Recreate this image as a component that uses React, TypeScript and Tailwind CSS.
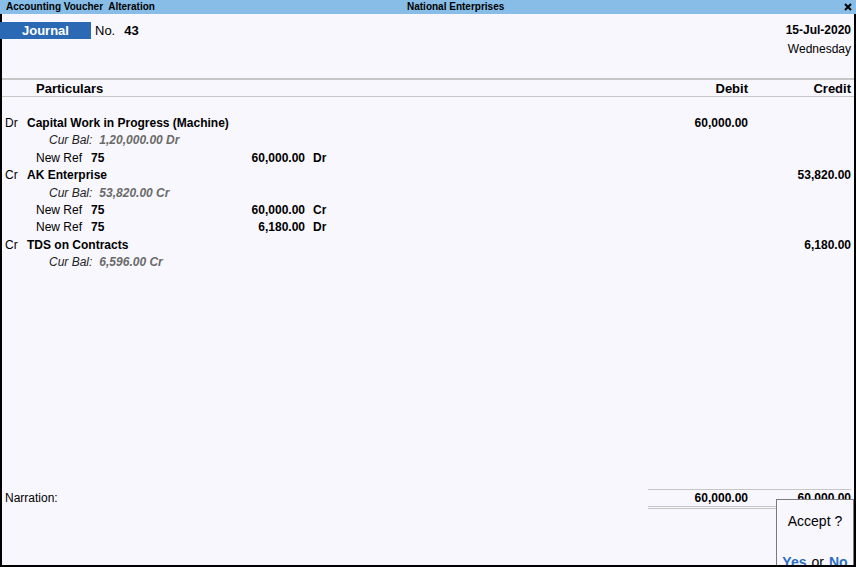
import React from "react"

type Bill = { ref: string; amount: string; side: string }
type Entry = {
    side: string
    ledger: string
    debit?: string
    credit?: string
    curBal: string
    bills: Bill[]
}

const entries: Entry[] = [
    {
        side: "Dr",
        ledger: "Capital Work in Progress (Machine)",
        debit: "60,000.00",
        curBal: "1,20,000.00 Dr",
        bills: [{ ref: "75", amount: "60,000.00", side: "Dr" }],
    },
    {
        side: "Cr",
        ledger: "AK Enterprise",
        credit: "53,820.00",
        curBal: "53,820.00 Cr",
        bills: [
            { ref: "75", amount: "60,000.00", side: "Cr" },
            { ref: "75", amount: "6,180.00", side: "Dr" },
        ],
    },
    {
        side: "Cr",
        ledger: "TDS on Contracts",
        credit: "6,180.00",
        curBal: "6,596.00 Cr",
        bills: [],
    },
]

function Row({ left, debit, credit }: { left: React.ReactNode; debit?: string; credit?: string }) {
    return (
        <div className="grid grid-cols-[1fr_100px_103px] h-[17.4px] leading-[17.4px] text-[12px]">
            <div className="flex">{left}</div>
            <div className="text-right font-bold">{debit}</div>
            <div className="text-right font-bold">{credit}</div>
        </div>
    )
}

export default function App() {
    return (
        <div className="relative w-[856px] h-[567px] overflow-hidden bg-[#f8f7fd] text-black font-['Liberation_Sans',Arial,sans-serif]">
            {/* title bar */}
            <div className="flex items-center h-[14px] bg-[#87bde7] text-[10px] font-bold leading-[14px]">
                <span className="w-[407px] pl-[6px]">Accounting Voucher&nbsp; Alteration</span>
                <span>National Enterprises</span>
                <span className="flex-1" />
                <svg width="8" height="8" viewBox="0 0 8 8" className="mr-[4px]">
                    <path d="M1 1L7 7M7 1L1 7" stroke="#000" strokeWidth="2" />
                </svg>
            </div>

            <div className="flex flex-col h-[553px] border-x-2 border-b-2 border-black">
                {/* voucher header */}
                <div className="flex justify-between h-[64px] pt-[8px] pr-[3px]">
                    <div className="flex h-[17px] leading-[17px] text-[13px]">
                        <div className="w-[91px] -ml-[2px] pl-[22px] bg-[#2c69b4] text-white font-bold">Journal</div>
                        <span className="ml-[4px]">No.</span>
                        <span className="ml-[9px] font-bold">43</span>
                    </div>
                    <div className="flex flex-col items-end text-[12px]">
                        <span className="h-[17px] leading-[17px] font-bold">15-Jul-2020</span>
                        <span className="mt-[2px] h-[17px] leading-[17px]">Wednesday</span>
                    </div>
                </div>

                <div className="h-[2px] bg-[#c6c6c6]" />
                <div className="grid grid-cols-[1fr_100px_103px] h-[16px] leading-[18px] text-[13px] font-bold pr-[3px] border-b border-[#c6c6c6] box-content">
                    <span className="pl-[34px]">Particulars</span>
                    <span className="text-right">Debit</span>
                    <span className="text-right">Credit</span>
                </div>

                {/* entries */}
                <div className="pt-[18px] pr-[3px]">
                    {entries.map((e, i) => (
                        <div key={i}>
                            <Row
                                debit={e.debit}
                                credit={e.credit}
                                left={
                                    <>
                                        <span className="w-[25px] pl-[3px]">{e.side}</span>
                                        <span className="font-bold">{e.ledger}</span>
                                    </>
                                }
                            />
                            <Row
                                left={
                                    <span className="pl-[47px] italic">
                                        <span className="text-[#222]">Cur Bal:</span>
                                        <span className="ml-[7px] font-bold text-[#6a6a6a]">{e.curBal}</span>
                                    </span>
                                }
                            />
                            {e.bills.map((b, j) => (
                                <Row
                                    key={j}
                                    left={
                                        <>
                                            <span className="w-[89px] pl-[34px]">New Ref</span>
                                            <span className="w-[80px] font-bold">{b.ref}</span>
                                            <span className="w-[134px] text-right font-bold">{b.amount}</span>
                                            <span className="pl-[8px] font-bold">{b.side}</span>
                                        </>
                                    }
                                />
                            ))}
                        </div>
                    ))}
                </div>

                <div className="flex-1" />

                {/* totals */}
                <div className="grid grid-cols-[1fr_100px_103px] text-[12px] pr-[3px]">
                    <span className="pl-[3px] pt-[1px] h-[17px] leading-[17px]">Narration:</span>
                    <span className="h-[17px] leading-[17px] border-t border-[#c6c6c6] text-right font-bold">60,000.00</span>
                    <span className="h-[17px] leading-[17px] border-t border-[#c6c6c6] text-right font-bold">60,000.00</span>
                    <span />
                    <span className="col-span-2 h-[3px] border-y border-[#c6c6c6]" />
                </div>
                <div className="h-[56px]" />
            </div>

            {/* accept dialog */}
            <div className="absolute left-[776px] top-[499px] w-[78px] h-[80px] border border-[#7b7b7b] bg-[#f8f7fd] flex flex-col items-center text-[14px]">
                <span className="mt-[12px] leading-[18px]">Accept ?</span>
                <span className="mt-[23px] leading-[18px]">
                    <span className="font-bold text-[#2c6ec2]">Yes</span>
                    <span className="mx-[5px]">or</span>
                    <span className="font-bold text-[#2c6ec2]">No</span>
                </span>
            </div>
            <div className="absolute left-[854px] top-[14px] w-[2px] h-[553px] bg-black" />
            <div className="absolute left-0 top-[565px] w-[856px] h-[2px] bg-black" />
        </div>
    )
}
